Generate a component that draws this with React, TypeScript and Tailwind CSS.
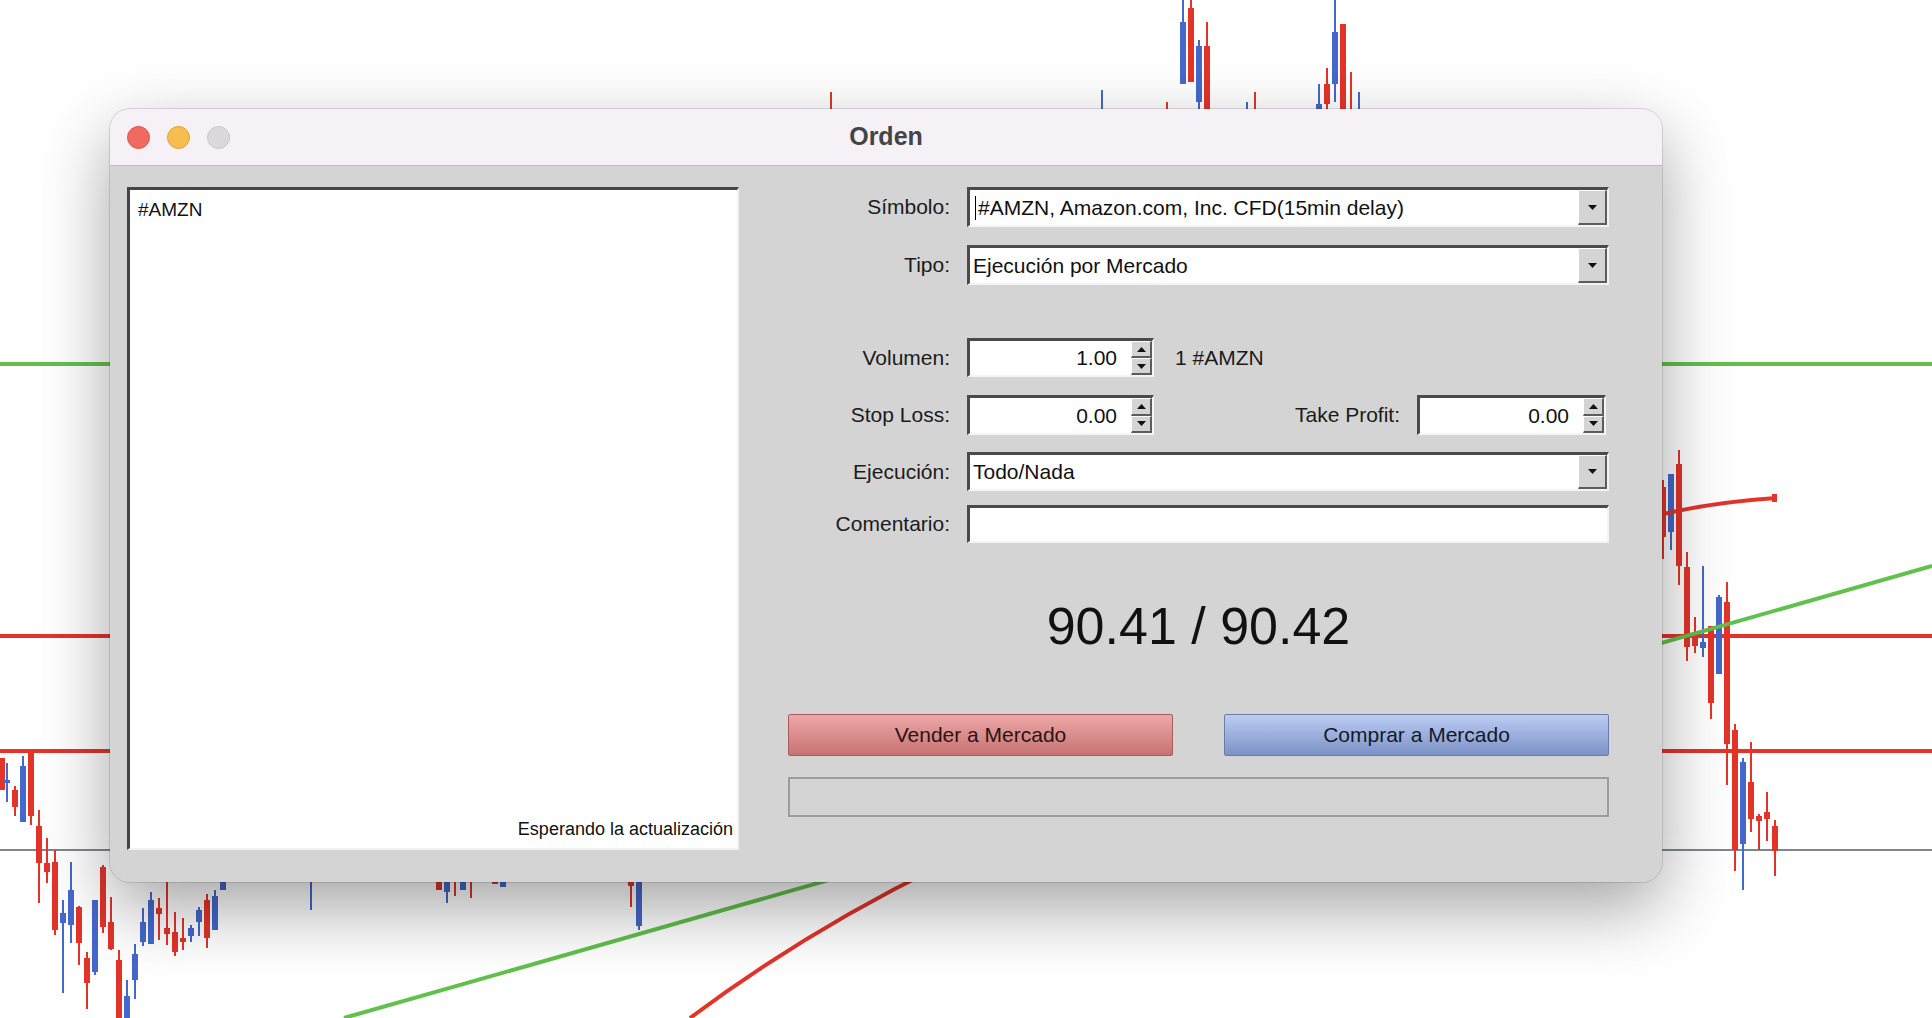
import type { ReactNode } from "react";

type Candle = {
  cx: number;
  c: "r" | "b";
  wt?: number;
  wb?: number;
  bt?: number;
  bb?: number;
};

const RED = "#e3342a";
const BLUE = "#4468cc";

/* ── chart data, picked off the screen by eye ───────────────────────────── */

const candles: Candle[] = [
  // above the window
  { cx: 831, c: "r", wt: 92, wb: 120 },
  { cx: 1102, c: "b", wt: 90, wb: 120 },
  { cx: 1167, c: "r", wt: 102, wb: 120 },
  { cx: 1183, c: "b", wt: 0, wb: 84, bt: 22, bb: 84 },
  { cx: 1191, c: "r", wt: 0, wb: 82, bt: 8, bb: 82 },
  { cx: 1199, c: "b", wt: 40, wb: 120, bt: 46, bb: 102 },
  { cx: 1207, c: "r", wt: 22, wb: 120, bt: 46, bb: 120 },
  { cx: 1247, c: "b", wt: 102, wb: 120 },
  { cx: 1255, c: "r", wt: 92, wb: 120 },
  { cx: 1319, c: "b", wt: 84, wb: 120, bt: 104, bb: 120 },
  { cx: 1327, c: "r", wt: 68, wb: 120, bt: 84, bb: 104 },
  { cx: 1335, c: "b", wt: 0, wb: 102, bt: 32, bb: 84 },
  { cx: 1343, c: "r", wt: 24, wb: 120, bt: 24, bb: 120 },
  { cx: 1351, c: "r", wt: 72, wb: 120 },
  { cx: 1359, c: "b", wt: 92, wb: 120 },
  // right of the window
  { cx: 1663, c: "r", wt: 480, wb: 559, bt: 487, bb: 537 },
  { cx: 1671, c: "b", wt: 474, wb: 550, bt: 474, bb: 532 },
  { cx: 1679, c: "r", wt: 450, wb: 585, bt: 464, bb: 566 },
  { cx: 1687, c: "r", wt: 552, wb: 661, bt: 567, bb: 647 },
  { cx: 1695, c: "r", wt: 617, wb: 653, bt: 637, bb: 646 },
  { cx: 1703, c: "b", wt: 566, wb: 657, bt: 642, bb: 648 },
  { cx: 1711, c: "r", wt: 626, wb: 719, bt: 626, bb: 703 },
  { cx: 1719, c: "b", wt: 595, wb: 674, bt: 597, bb: 674 },
  { cx: 1727, c: "r", wt: 582, wb: 785, bt: 602, bb: 744 },
  { cx: 1735, c: "r", wt: 724, wb: 871, bt: 730, bb: 850 },
  { cx: 1743, c: "b", wt: 758, wb: 890, bt: 762, bb: 844 },
  { cx: 1751, c: "r", wt: 742, wb: 832, bt: 782, bb: 819 },
  { cx: 1759, c: "r", wt: 814, wb: 850, bt: 816, bb: 821 },
  { cx: 1767, c: "r", wt: 792, wb: 841, bt: 812, bb: 819 },
  { cx: 1775, c: "r", wt: 820, wb: 876, bt: 826, bb: 851 },
  // lower left
  { cx: 1.5, c: "r", wt: 758, wb: 790, bt: 758, bb: 790 },
  { cx: 7, c: "b", wt: 763, wb: 802, bt: 780, bb: 783 },
  { cx: 14.5, c: "r", wt: 786, wb: 816, bt: 790, bb: 807 },
  { cx: 23, c: "b", wt: 756, wb: 822, bt: 766, bb: 822 },
  { cx: 31, c: "r", wt: 752, wb: 825, bt: 752, bb: 816 },
  { cx: 39, c: "r", wt: 810, wb: 903, bt: 826, bb: 863 },
  { cx: 47, c: "r", wt: 838, wb: 883, bt: 863, bb: 872 },
  { cx: 55, c: "r", wt: 850, wb: 935, bt: 862, bb: 930 },
  { cx: 63, c: "b", wt: 900, wb: 993, bt: 913, bb: 923 },
  { cx: 71, c: "b", wt: 862, wb: 943, bt: 890, bb: 925 },
  { cx: 79, c: "r", wt: 906, wb: 965, bt: 907, bb: 943 },
  { cx: 87, c: "r", wt: 952, wb: 1009, bt: 958, bb: 983 },
  { cx: 95, c: "b", wt: 900, wb: 975, bt: 900, bb: 972 },
  { cx: 103, c: "r", wt: 865, wb: 933, bt: 867, bb: 927 },
  { cx: 111, c: "r", wt: 897, wb: 950, bt: 922, bb: 949 },
  { cx: 119, c: "r", wt: 950, wb: 1018, bt: 960, bb: 1018 },
  { cx: 127, c: "b", wt: 980, wb: 1018, bt: 996, bb: 1018 },
  { cx: 135, c: "b", wt: 944, wb: 999, bt: 954, bb: 980 },
  { cx: 143, c: "b", wt: 908, wb: 946, bt: 922, bb: 942 },
  { cx: 151, c: "b", wt: 892, wb: 944, bt: 900, bb: 944 },
  { cx: 159, c: "r", wt: 898, wb: 940, bt: 908, bb: 914 },
  { cx: 167, c: "r", wt: 882, wb: 945, bt: 928, bb: 934 },
  { cx: 175, c: "r", wt: 912, wb: 956, bt: 932, bb: 952 },
  { cx: 183, c: "r", wt: 918, wb: 950, bt: 938, bb: 942 },
  { cx: 191, c: "b", wt: 925, wb: 942, bt: 928, bb: 936 },
  { cx: 199, c: "b", wt: 907, wb: 936, bt: 910, bb: 922 },
  { cx: 207, c: "r", wt: 894, wb: 948, bt: 900, bb: 938 },
  { cx: 215, c: "b", wt: 890, wb: 930, bt: 896, bb: 930 },
  { cx: 223, c: "b", wt: 870, wb: 890, bt: 870, bb: 890 },
  { cx: 311, c: "b", wt: 870, wb: 910 },
  { cx: 439, c: "r", bt: 870, bb: 890 },
  { cx: 447, c: "b", wt: 870, wb: 903, bt: 870, bb: 892 },
  { cx: 455, c: "r", wt: 870, wb: 896 },
  { cx: 463, c: "b", bt: 870, bb: 890 },
  { cx: 471, c: "r", wt: 870, wb: 898 },
  { cx: 495, c: "r", bt: 870, bb: 884 },
  { cx: 503, c: "b", bt: 870, bb: 887 },
  { cx: 631, c: "r", wt: 870, wb: 907, bt: 870, bb: 886 },
  { cx: 639, c: "b", wt: 870, wb: 930, bt: 870, bb: 926 },
];

function Chart() {
  return (
    <svg
      className="absolute inset-0"
      width={1932}
      height={1018}
      viewBox="0 0 1932 1018"
      shapeRendering="crispEdges"
    >
      <rect width={1932} height={1018} fill="#ffffff" />
      <rect x={0} y={362} width={1932} height={4} fill="#62c04c" />
      <rect x={0} y={634} width={1932} height={4} fill={RED} />
      <rect x={0} y={749} width={1932} height={4} fill={RED} />
      <rect x={0} y={849} width={1932} height={2} fill="#7c8794" />
      {candles.map((k, i) => {
        const col = k.c === "r" ? RED : BLUE;
        return (
          <g key={i} fill={col}>
            {k.wt !== undefined && k.wb !== undefined && (
              <rect x={k.cx - 1} y={k.wt} width={2} height={k.wb - k.wt} />
            )}
            {k.bt !== undefined && k.bb !== undefined && (
              <rect x={k.cx - 3} y={k.bt} width={6} height={Math.max(2, k.bb - k.bt)} />
            )}
          </g>
        );
      })}
      <path d="M344 1018 L1932 566" stroke="#62c04c" strokeWidth={4} fill="none" shapeRendering="auto" />
      <path d="M690 1018 Q 805 932 940 866" stroke={RED} strokeWidth={4} fill="none" shapeRendering="auto" />
      <path d="M1640 520 Q 1700 503 1776 498" stroke={RED} strokeWidth={4} fill="none" shapeRendering="auto" />
      <rect x={1772} y={494} width={5} height={8} fill={RED} />
    </svg>
  );
}

/* ── win32-ish controls ─────────────────────────────────────────────────── */

function Sunken({ className, children }: { className?: string; children?: ReactNode }) {
  return (
    <div
      className={
        "flex bg-white border-t-[3px] border-l-[3px] border-r-2 border-b-2 border-t-[#4a4a4a] border-l-[#4a4a4a] border-r-[#f4f4f4] border-b-[#f4f4f4] " +
        (className ?? "")
      }
    >
      {children}
    </div>
  );
}

function Arrow({ up }: { up?: boolean }) {
  return (
    <svg width="9" height="5" viewBox="0 0 9 5">
      <path d={up ? "M0 5H9L4.5 0Z" : "M0 0H9L4.5 5Z"} fill="#111" />
    </svg>
  );
}

function Combo({ value, caret }: { value: string; caret?: boolean }) {
  return (
    <Sunken className="h-full w-full items-stretch">
      <div
        className={
          "relative flex flex-1 items-center text-[21px] text-[#111] " +
          (caret ? "pl-[8px]" : "pl-[3px]")
        }
      >
        {caret && <span className="absolute left-[5px] top-[6px] h-[24px] w-px bg-black" />}
        {value}
      </div>
      <div className="flex w-[29px] items-center justify-center bg-[#d4d4d4] border-t border-l border-t-white border-l-white border-r-2 border-b-2 border-r-[#5c5c5c] border-b-[#5c5c5c]">
        <Arrow />
      </div>
    </Sunken>
  );
}

function Spin({ value, className }: { value: string; className?: string }) {
  return (
    <Sunken className={"h-full items-stretch " + (className ?? "")}>
      <div className="flex flex-1 items-center justify-end pr-[14px] text-[21px] text-[#111]">
        {value}
      </div>
      <div className="flex w-[21px] flex-col">
        <div className="flex flex-1 items-center justify-center bg-[#d4d4d4] border-t border-l border-t-white border-l-white border-r-2 border-b-2 border-r-[#5c5c5c] border-b-[#5c5c5c]">
          <Arrow up />
        </div>
        <div className="flex flex-1 items-center justify-center bg-[#d4d4d4] border-t border-l border-t-white border-l-white border-r-2 border-b-2 border-r-[#5c5c5c] border-b-[#5c5c5c]">
          <Arrow />
        </div>
      </div>
    </Sunken>
  );
}

function Label({ children }: { children: ReactNode }) {
  return (
    <div className="w-[162px] shrink-0 text-right text-[21px] text-[#1b1b1b]">{children}</div>
  );
}

/* ── dialog ─────────────────────────────────────────────────────────────── */

export default function App() {
  return (
    <div className="relative h-[1018px] w-[1932px] overflow-hidden bg-white font-['Liberation_Sans',Arial,sans-serif]">
      <Chart />

      <div className="absolute left-[110px] top-[109px] flex h-[773px] w-[1552px] flex-col overflow-hidden rounded-[20px] bg-[#d4d4d4] shadow-[0_26px_70px_rgba(0,0,0,0.36),0_0_0_1px_rgba(0,0,0,0.12)]">
        {/* title bar */}
        <div className="relative flex h-[57px] shrink-0 items-center border-b border-[#bcbcbc] bg-[#f6f1f6] pl-[17px]">
          <div className="flex gap-[17px]">
            <span className="h-[23px] w-[23px] rounded-full border border-[#d9564c] bg-[#ef6a5f]" />
            <span className="h-[23px] w-[23px] rounded-full border border-[#d9a23b] bg-[#f6be4f]" />
            <span className="h-[23px] w-[23px] rounded-full border border-[#c9c4ca] bg-[#ddd8de]" />
          </div>
          <div className="absolute inset-x-0 top-0 flex h-full items-center justify-center text-[25px] font-bold text-[#444]">
            Orden
          </div>
        </div>

        {/* body */}
        <div className="flex flex-1 pl-[17px] pt-[21px]">
          {/* quote list */}
          <div className="flex h-[663px] w-[612px] flex-col justify-between bg-white border-t-[3px] border-l-[3px] border-r-2 border-b-2 border-t-[#454545] border-l-[#454545] border-r-[#f2f2f2] border-b-[#f2f2f2]">
            <div className="pl-[8px] pt-[6px] text-[19px] text-[#111]">#AMZN</div>
            <div className="pb-[5px] pr-[4px] text-right text-[18px] text-[#111]">
              Esperando la actualización
            </div>
          </div>

          {/* form */}
          <div className="ml-[49px] flex w-[821px] flex-col">
            <div className="flex h-[40px] items-center">
              <Label>Símbolo:</Label>
              <div className="ml-[17px] h-full flex-1">
                <Combo value="#AMZN, Amazon.com, Inc. CFD(15min delay)" caret />
              </div>
            </div>
            <div className="mt-[18px] flex h-[40px] items-center">
              <Label>Tipo:</Label>
              <div className="ml-[17px] h-full flex-1">
                <Combo value="Ejecución por Mercado" />
              </div>
            </div>

            <div className="mt-[53px] flex h-[39px] items-center">
              <Label>Volumen:</Label>
              <Spin value="1.00" className="ml-[17px] w-[187px]" />
              <div className="ml-[21px] text-[21px] text-[#1b1b1b]">1 #AMZN</div>
            </div>
            <div className="mt-[18px] flex h-[40px] items-center">
              <Label>Stop Loss:</Label>
              <Spin value="0.00" className="ml-[17px] w-[187px]" />
              <div className="flex-1" />
              <div className="text-[21px] text-[#1b1b1b]">Take Profit:</div>
              <Spin value="0.00" className="ml-[17px] mr-[3px] w-[189px]" />
            </div>
            <div className="mt-[17px] flex h-[39px] items-center">
              <Label>Ejecución:</Label>
              <div className="ml-[17px] h-full flex-1">
                <Combo value="Todo/Nada" />
              </div>
            </div>
            <div className="mt-[14px] flex h-[38px] items-center">
              <Label>Comentario:</Label>
              <Sunken className="ml-[17px] h-full flex-1" />
            </div>

            <div className="flex h-[171px] items-center justify-center pb-[6px] text-[52px] leading-[60px] text-[#111]">
              90.41 / 90.42
            </div>

            <div className="flex h-[42px] justify-between">
              <button className="w-[385px] rounded-[2px] border border-[#a95c5c] bg-gradient-to-b from-[#eda8a8] to-[#c77272] text-[21px] text-[#2a1414]">
                Vender a Mercado
              </button>
              <button className="w-[385px] rounded-[2px] border border-[#6a7bae] bg-gradient-to-b from-[#bccdf3] to-[#7d92c6] text-[21px] text-[#141a2a]">
                Comprar a Mercado
              </button>
            </div>
            <div className="mt-[21px] h-[40px] border-2 border-[#9c9c9c]" />
          </div>
        </div>
      </div>
    </div>
  );
}
